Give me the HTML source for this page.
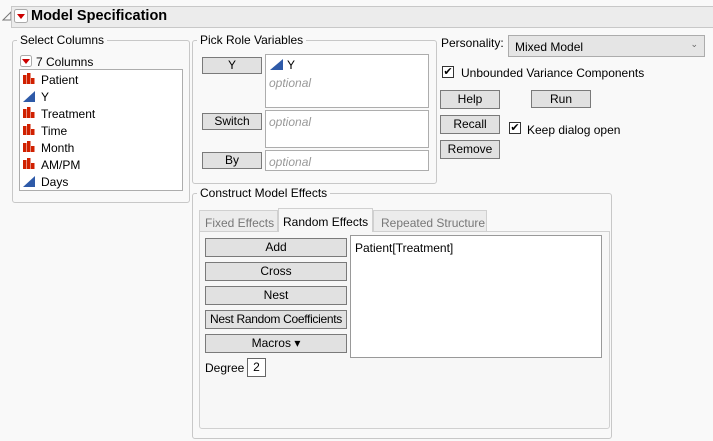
<!DOCTYPE html>
<html><head><style>
*{box-sizing:border-box;margin:0;padding:0}
body{width:713px;height:441px;background:#f9f9f9;font-family:"Liberation Sans",sans-serif;font-size:12px;color:#000;position:relative;overflow:hidden}
.a{position:absolute}
.btn{position:absolute;background:#e1e1e1;border:1px solid #7a7a7a;text-align:center;font-size:12px;line-height:17px}
.box{position:absolute;background:#fff;border:1px solid #adadad}
.grp{position:absolute;border:1px solid #c8c8c8;border-radius:3px}
.lbl{position:absolute;background:#f9f9f9;padding:0 3px;font-size:12px;line-height:14px}
.opt{color:#999;font-style:italic}
.nom{position:absolute;width:12px;height:11px}
.cb{position:absolute;width:12px;height:12px;border:1px solid #333;background:#fff;font-size:11px;line-height:10px;text-align:center}
</style></head><body>
<svg class="a" style="left:2px;top:11px" width="10" height="10"><path d="M1 9 L9 1 L9 9 Z" fill="none" stroke="#777"/></svg>
<div class="a" style="left:11px;top:6px;width:702px;height:22px;background:#ececec;border:1px solid #c8c8c8;border-right:none"></div>
<svg class="a" style="left:14px;top:9px" width="14" height="14"><rect x="0.5" y="0.5" width="13" height="13" fill="#fff" stroke="#aaa" rx="2"/><path d="M3 5 L11 5 L7 10 Z" fill="#c00"/></svg>
<div class="a" style="left:31px;top:8px;font-weight:bold;font-size:14.5px">Model Specification</div>

<div class="grp" style="left:12px;top:40px;width:178px;height:163px"></div>
<div class="lbl" style="left:17px;top:33px">Select Columns</div>
<svg class="a" style="left:20px;top:55px" width="12" height="12"><rect x="0.5" y="0.5" width="11" height="11" fill="#fff" stroke="#aaa" rx="2"/><path d="M2 4 L10 4 L6 9 Z" fill="#c00"/></svg>
<div class="a" style="left:36px;top:55px">7 Columns</div>
<div class="box" style="left:19px;top:69px;width:164px;height:122px"></div>

<div class="grp" style="left:192px;top:40px;width:245px;height:144px"></div>
<div class="lbl" style="left:197px;top:33px">Pick Role Variables</div>
<div class="btn" style="left:202px;top:57px;width:60px;height:17px;line-height:15px">Y</div>
<div class="box" style="left:265px;top:54px;width:164px;height:54px"></div>
<svg class="a" style="left:270px;top:59px" width="13" height="11"><path d="M0 11 L13 11 L13 0 Z" fill="#2e5aa8"/></svg>
<div class="a" style="left:287px;top:58px">Y</div>
<div class="a opt" style="left:269px;top:76px">optional</div>
<div class="btn" style="left:202px;top:113px;width:60px;height:17px;line-height:15px">Switch</div>
<div class="box" style="left:265px;top:110px;width:164px;height:38px"></div>
<div class="a opt" style="left:269px;top:115px">optional</div>
<div class="btn" style="left:202px;top:152px;width:60px;height:17px;line-height:15px">By</div>
<div class="box" style="left:265px;top:150px;width:164px;height:21px"></div>
<div class="a opt" style="left:269px;top:155px">optional</div>

<div class="a" style="left:441px;top:36px">Personality:</div>
<div class="a" style="left:508px;top:35px;width:197px;height:22px;background:#e5e5e5;border:1px solid #acacac;padding:4px 6px">Mixed Model<span style="position:absolute;right:6px;top:3px;font-size:9px;color:#666">&#8964;</span></div>
<div class="cb" style="left:442px;top:66px">&#10004;</div>
<div class="a" style="left:461px;top:66px">Unbounded Variance Components</div>
<div class="btn" style="left:440px;top:90px;width:60px;height:19px">Help</div>
<div class="btn" style="left:531px;top:90px;width:60px;height:18px;line-height:16px">Run</div>
<div class="btn" style="left:440px;top:115px;width:60px;height:19px">Recall</div>
<div class="cb" style="left:509px;top:122px">&#10004;</div>
<div class="a" style="left:527px;top:123px">Keep dialog open</div>
<div class="btn" style="left:440px;top:140px;width:60px;height:19px">Remove</div>

<div class="grp" style="left:192px;top:193px;width:420px;height:246px"></div>
<div class="lbl" style="left:197px;top:186px">Construct Model Effects</div>
<div class="a" style="left:199px;top:231px;width:411px;height:198px;background:#f7f7f7;border:1px solid #d0d0d0;border-radius:0 0 3px 3px"></div>
<div class="a" style="left:199px;top:210px;width:79px;height:22px;background:#ececec;border:1px solid #d0d0d0;color:#777;padding:5px 0 0 5px">Fixed Effects</div>
<div class="a" style="left:278px;top:208px;width:95px;height:24px;background:#f7f7f7;border:1px solid #d0d0d0;border-bottom:none;padding:6px 0 0 4px">Random Effects</div>
<div class="a" style="left:373px;top:210px;width:114px;height:22px;background:#ececec;border:1px solid #d0d0d0;color:#777;padding:5px 0 0 7px">Repeated Structure</div>
<div class="btn" style="left:205px;top:238px;width:142px;height:19px">Add</div>
<div class="btn" style="left:205px;top:262px;width:142px;height:19px">Cross</div>
<div class="btn" style="left:205px;top:286px;width:142px;height:19px">Nest</div>
<div class="btn" style="left:205px;top:310px;width:142px;height:19px;font-size:12px;letter-spacing:-0.3px">Nest Random Coefficients</div>
<div class="btn" style="left:205px;top:334px;width:142px;height:19px">Macros &#9662;</div>
<div class="box" style="left:350px;top:235px;width:252px;height:123px;border-color:#999"></div>
<div class="a" style="left:355px;top:241px">Patient[Treatment]</div>
<div class="a" style="left:205px;top:361px">Degree</div>
<div class="box" style="left:247px;top:358px;width:19px;height:19px;border-color:#666;text-align:center;line-height:17px">2</div>

<div class="a" style="left:0;top:0">
<svg class="nom" style="left:23px;top:73px" viewBox="0 0 12 11"><path d="M0 11V2h3.5v9zM4 11V0h3.5v11zM8 11V5h3.5v6z" fill="#d02000"/></svg>
<div class="a" style="left:41px;top:73px">Patient</div>
<svg class="nom" style="left:23px;top:91px" viewBox="0 0 12 11"><path d="M0 11H12V0Z" fill="#2e5aa8"/></svg>
<div class="a" style="left:41px;top:90px">Y</div>
<svg class="nom" style="left:23px;top:107px" viewBox="0 0 12 11"><path d="M0 11V2h3.5v9zM4 11V0h3.5v11zM8 11V5h3.5v6z" fill="#d02000"/></svg>
<div class="a" style="left:41px;top:107px">Treatment</div>
<svg class="nom" style="left:23px;top:124px" viewBox="0 0 12 11"><path d="M0 11V2h3.5v9zM4 11V0h3.5v11zM8 11V5h3.5v6z" fill="#d02000"/></svg>
<div class="a" style="left:41px;top:124px">Time</div>
<svg class="nom" style="left:23px;top:141px" viewBox="0 0 12 11"><path d="M0 11V2h3.5v9zM4 11V0h3.5v11zM8 11V5h3.5v6z" fill="#d02000"/></svg>
<div class="a" style="left:41px;top:141px">Month</div>
<svg class="nom" style="left:23px;top:158px" viewBox="0 0 12 11"><path d="M0 11V2h3.5v9zM4 11V0h3.5v11zM8 11V5h3.5v6z" fill="#d02000"/></svg>
<div class="a" style="left:41px;top:158px">AM/PM</div>
<svg class="nom" style="left:23px;top:176px" viewBox="0 0 12 11"><path d="M0 11H12V0Z" fill="#2e5aa8"/></svg>
<div class="a" style="left:41px;top:175px">Days</div>
</div>
</body></html>
